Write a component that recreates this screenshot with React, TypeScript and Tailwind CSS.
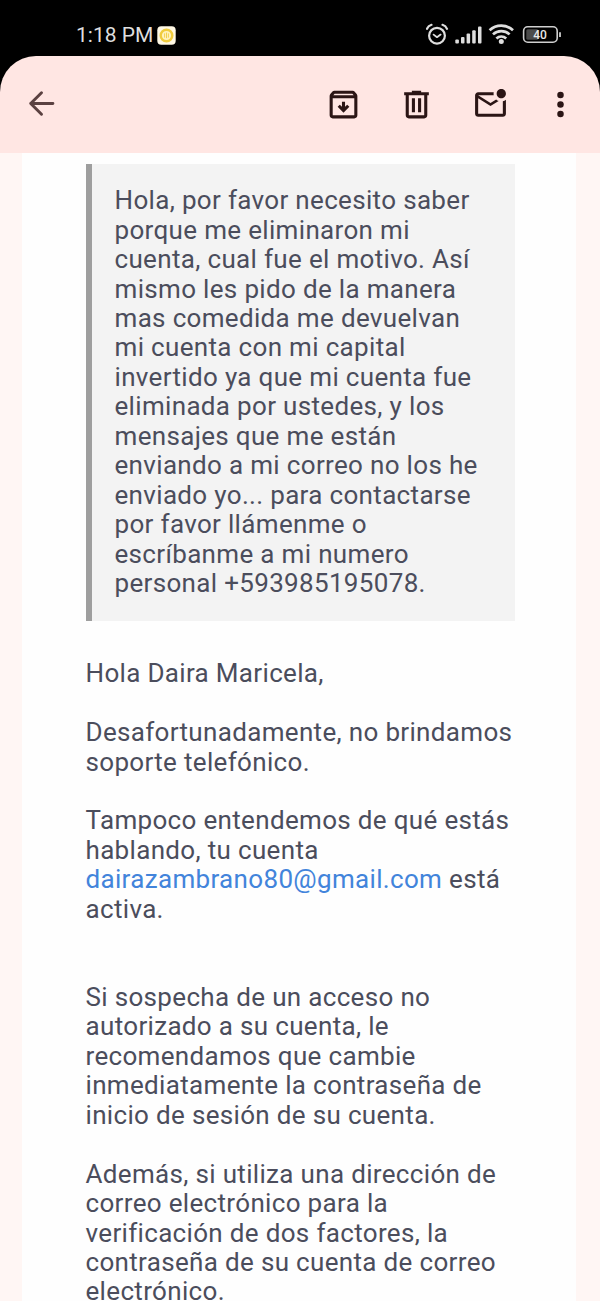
import { Fragment } from "react";

const quoteLines = [
  "Hola, por favor necesito saber",
  "porque me eliminaron mi",
  "cuenta, cual fue el motivo. Así",
  "mismo les pido de la manera",
  "mas comedida me devuelvan",
  "mi cuenta con mi capital",
  "invertido ya que mi cuenta fue",
  "eliminada por ustedes, y los",
  "mensajes que me están",
  "enviando a mi correo no los he",
  "enviado yo... para contactarse",
  "por favor llámenme o",
  "escríbanme a mi numero",
  "personal +593985195078.",
];

const securityLines = [
  "Si sospecha de un acceso no",
  "autorizado a su cuenta, le",
  "recomendamos que cambie",
  "inmediatamente la contraseña de",
  "inicio de sesión de su cuenta.",
];

const twoFactorLines = [
  "Además, si utiliza una dirección de",
  "correo electrónico para la",
  "verificación de dos factores, la",
  "contraseña de su cuenta de correo",
  "electrónico.",
];

function Lines({ lines }: { lines: string[] }) {
  return (
    <>
      {lines.map((line) => (
        <Fragment key={line}>
          {line}
          <br />
        </Fragment>
      ))}
    </>
  );
}

function StatusBar() {
  return (
    <div className="flex h-[56px] items-start justify-between pt-[22px] pr-[38px] pl-[76px] text-[#dedede]">
      <div className="flex items-center">
        <span className="w-[81px] text-[21px] leading-[26px] whitespace-nowrap">1:18 PM</span>
        <svg className="mt-px h-[19px] w-[19px]" viewBox="0 0 19 19">
          <rect x="0.3" y="0.3" width="18.4" height="18.4" rx="4" fill="#fff8e4" />
          <circle cx="9.5" cy="9.5" r="5.8" fill="#fff2bd" stroke="#f0cc3e" strokeWidth="2.4" />
          <path d="M7.6 7.4v4.2M11.4 7.4v4.2M9.5 6.6v5.6" stroke="#f0cc3e" strokeWidth="0.9" />
        </svg>
      </div>
      {/* alarm, signal, wifi, battery */}
      <svg className="mt-[-1px] h-[28px] w-[136px]" viewBox="426 21 136 28" fill="none">
        <g stroke="#dedede" strokeLinecap="round">
          <circle cx="437" cy="35.7" r="7.9" strokeWidth="2.2" />
          <path d="M433.6 34.6l3.4 2.6 3.6-2.6" strokeWidth="1.8" strokeLinejoin="round" />
          <path d="M427 28.8q1.2-3 4.5-4M447 28.8q-1.2-3-4.5-4" strokeWidth="2.2" />
        </g>
        <g fill="#dedede">
          <rect x="455.3" y="39.6" width="3.6" height="3.9" rx="1" />
          <rect x="461" y="37" width="3.5" height="6.5" rx="1" />
          <rect x="466.6" y="33.6" width="3.5" height="9.9" rx="1" />
          <rect x="472.2" y="30.2" width="3.5" height="13.3" rx="1" />
          <rect x="478" y="26.6" width="3.5" height="16.9" rx="1" />
          <circle cx="501.3" cy="41.6" r="2.5" />
        </g>
        <g stroke="#dedede" strokeWidth="2.7">
          <path d="M489.6 30.3a17 17 0 0 1 23.4 0" />
          <path d="M493 34.4a12 12 0 0 1 16.6 0" />
          <path d="M496.4 38.4a7.2 7.2 0 0 1 9.8 0" />
        </g>
        <rect x="523.6" y="26.8" width="33.6" height="15.4" rx="4.2" stroke="#cfcfcf" strokeWidth="1.6" />
        <rect x="526.3" y="29.2" width="12" height="10.6" rx="1.5" fill="#4b4b4b" />
        <path d="M560 32.3v4.6" stroke="#cfcfcf" strokeWidth="1.8" />
        <text x="540" y="39" textAnchor="middle" fontSize="12" fontWeight="500" fill="#e8e8e8">
          40
        </text>
      </svg>
    </div>
  );
}

function Toolbar() {
  return (
    <header className="flex h-[97px] items-start justify-between rounded-t-[36px] bg-[#ffe6e3] pt-[30px] pr-[21px] pl-[23px] text-[#2b1515]">
      <svg className="mt-[-1px] h-[37px] w-[37px] text-[#5b4141]" viewBox="0 0 24 24" fill="none" stroke="currentColor" strokeWidth="1.9" strokeLinecap="round" strokeLinejoin="round">
        <path d="M19.4 12H5M12 5l-7 7 7 7" />
      </svg>
      <div className="flex">
        <svg className="mr-[36px] h-[37px] w-[37px]" viewBox="0 0 24 24" fill="currentColor">
          <path d="M20.54 5.23l-1.39-1.68C18.88 3.21 18.47 3 18 3H6c-.47 0-.88.21-1.16.55L3.46 5.23C3.17 5.57 3 6.02 3 6.5V19c0 1.1.9 2 2 2h14c1.1 0 2-.9 2-2V6.5c0-.48-.17-.93-.46-1.27zM6.24 5h11.52l.83 1H5.42l.82-1zM5 19V8h14v11H5z" />
          <path d="M11 10.2h2v3.3l1.4-1.4 1.4 1.4L12 17.3l-3.8-3.8 1.4-1.4 1.4 1.4z" />
        </svg>
        <svg className="mr-[37px] h-[37px] w-[37px]" viewBox="0 0 24 24" fill="currentColor">
          <path d="M15 4V3H9v1H4v2h1v13c0 1.1.9 2 2 2h10c1.1 0 2-.9 2-2V6h1V4h-5zm2 15H7V6h10v13z" />
          <path d="M9 8h2v9H9zM13 8h2v9h-2z" />
        </svg>
        <svg className="mr-[33px] h-[37px] w-[37px]" viewBox="0 0 24 24" fill="currentColor">
          <path d="M22 8.98V18c0 1.1-.9 2-2 2H4c-1.1 0-2-.9-2-2V6c0-1.1.9-2 2-2h10.1c-.06.32-.1.66-.1 1s.04.68.1 1H4l8 5 3.67-2.29c.47.43 1.02.76 1.63.98L12 13 4 8v10h16V9.9c.74-.15 1.42-.48 2-.92zM16 5c0 1.66 1.34 3 3 3s3-1.34 3-3-1.34-3-3-3-3 1.34-3 3z" />
        </svg>
        <svg className="h-[37px] w-[37px]" viewBox="0 0 24 24" fill="currentColor">
          <circle cx="12" cy="5.9" r="2.1" />
          <circle cx="12" cy="12" r="2.1" />
          <circle cx="12" cy="18.1" r="2.1" />
        </svg>
      </div>
    </header>
  );
}

export default function App() {
  return (
    <div className="h-[1301px] w-[600px] overflow-hidden bg-black font-['Roboto',sans-serif]">
      <StatusBar />
      <Toolbar />
      <div className="h-[1148px] bg-[#fff6f4] pr-[24px] pl-[22px]">
        <main className="h-full bg-[#fefefe] pt-[11px] pl-[63.5px] text-[26px] leading-[29.44px] tracking-[0.33px] whitespace-nowrap text-[#4b4d5c]">
          <blockquote className="h-[457px] w-[429.5px] border-l-[6px] border-[#9e9e9e] bg-[#f3f3f3] pt-[22.3px] pl-[23px]">
            <Lines lines={quoteLines} />
          </blockquote>
          <div className="flex flex-col gap-[29.44px] pt-[38.2px]">
            <p>Hola Daira Maricela,</p>
            <p>
              Desafortunadamente, no brindamos
              <br />
              soporte telefónico.
            </p>
            <p className="mb-[29.44px]">
              Tampoco entendemos de qué estás
              <br />
              hablando, tu cuenta
              <br />
              <a className="text-[#4284db]">dairazambrano80@gmail.com</a> está
              <br />
              activa.
            </p>
            <p>
              <Lines lines={securityLines} />
            </p>
            <p>
              <Lines lines={twoFactorLines} />
            </p>
          </div>
        </main>
      </div>
    </div>
  );
}
